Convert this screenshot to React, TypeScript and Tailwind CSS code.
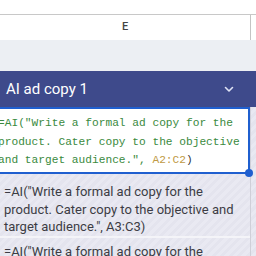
export default function App() {
  const stripes =
    'bg-[repeating-linear-gradient(135deg,#e4e4ee_0px,#e4e4ee_3px,#e9e9f2_3px,#e9e9f2_6px)]';

  return (
    <div className="w-[256px] h-[256px] overflow-hidden bg-white font-['Roboto',sans-serif]">
      {/* top strip */}
      <div className="h-[15px] border-b border-[#c8c8c8] bg-white" />

      {/* column header */}
      <div className="flex h-[25px]">
        <div className="w-[250px] flex items-center justify-center text-[11px] text-[#444] font-medium">
          E
        </div>
        <div className="w-px bg-[#c4c4c4]" />
        <div className="flex-1" />
      </div>

      {/* gray row */}
      <div className="h-[31px] bg-[#eceff3]" />

      {/* table header */}
      <div className="h-[36px] bg-[#3e4a8b] flex items-center justify-between pl-[6px] pr-[21px]">
        <span className="text-white text-[15px]">AI ad copy 1</span>
        <svg width="12" height="12" viewBox="0 0 12 12" fill="none">
          <path d="M2.5 4.5 L6 8 L9.5 4.5" stroke="#dfe3f5" strokeWidth="1.6" strokeLinecap="round" strokeLinejoin="round" />
        </svg>
      </div>

      {/* rows */}
      <div className="flex">
        <div className="w-[250px] flex flex-col">
          {/* selected cell */}
          <div className="relative h-[67px] border-2 border-l-0 border-[#1f5fcf] bg-white pt-[5px]">
            <div className="-ml-[2px] font-['Liberation_Mono',monospace] text-[11.2px] leading-[18.5px] text-[#3a8a3e] whitespace-pre">
              {'=AI("Write a formal ad copy for the\nproduct. Cater copy to the objective\nand target audience.", '}
              <span className="text-[#c09a45]">A2:C2</span>
              <span className="text-[#333]">)</span>
            </div>
            <div className="absolute -right-[5px] -bottom-[5px] w-[8px] h-[8px] rounded-full bg-[#1f5fcf]" />
          </div>

          {/* next cell */}
          <div className={`h-[64px] ${stripes} pl-[4px] pt-[9px] text-[13px] leading-[17.5px] text-[#3c3c44] border-b-2 border-[#f4f4f8]`}>
            <div>=AI("Write a formal ad copy for the</div>
            <div>product. Cater copy to the objective and</div>
            <div>target audience.", A3:C3)</div>
          </div>

          {/* following cell */}
          <div className={`h-[40px] ${stripes} pl-[4px] pt-[5px] text-[13px] leading-[17.5px] text-[#3c3c44]`}>
            <div>=AI("Write a formal ad copy for the</div>
          </div>
        </div>
        <div className="w-px bg-[#cfcfd8]" />
        <div className={`flex-1 ${stripes}`} />
      </div>
    </div>
  );
}
